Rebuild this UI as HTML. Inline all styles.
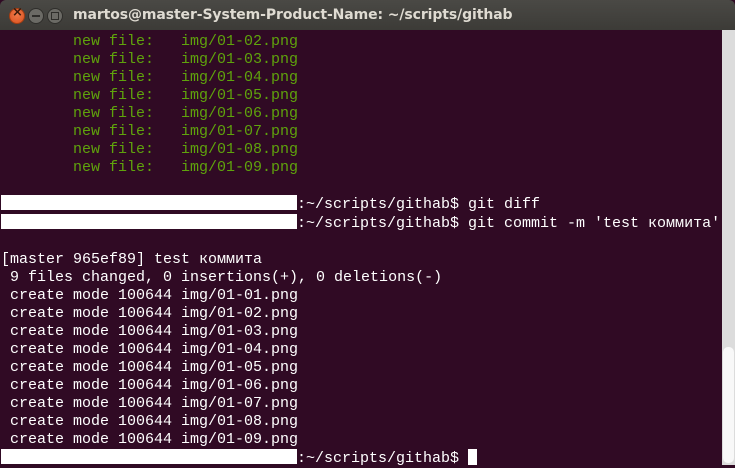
<!DOCTYPE html>
<html><head><meta charset="utf-8"><style>
body{margin:0;width:735px;height:465px;overflow:hidden;background:#300a24;position:relative;font-family:"Liberation Mono",monospace}
#tb{position:absolute;left:0;top:0;width:735px;height:30px;background:linear-gradient(#4a4945,#3c3b37);border-radius:6px 6px 0 0}
.b{position:absolute;top:8px;width:16px;height:16px;border-radius:50%;box-sizing:border-box}
#title{position:absolute;left:73px;top:7px;color:#dfdbd2;font:bold 14px "DejaVu Sans","Liberation Sans",sans-serif;letter-spacing:-0.1px}
#term{position:absolute;left:1px;top:33px;font-size:15px;line-height:18px;color:#fff;white-space:pre}
.g{color:#5fa30c}
.w{display:inline-block;background:#fff;width:296px;height:15px;vertical-align:-2px}
#sb{position:absolute;left:722px;top:30px;width:13px;height:435px;background:#dcdcdc}
#th{position:absolute;left:723px;top:347px;width:11px;height:116px;background:#f8f8f8;border-radius:5px}
#cur{display:inline-block;width:9px;height:16px;background:#fff;vertical-align:-3px}
</style></head><body>
<div id="tb">
<div class="b" style="left:9px;background:radial-gradient(circle at 50% 40%,#f07a4a,#d9501e);border:1px solid #a43d12"></div>
<span style="position:absolute;left:12px;top:5px;color:#3a1a0a;font:bold 13px 'DejaVu Sans',sans-serif">×</span>
<div class="b" style="left:28px;background:#6b6a65;border:1px solid #2f2e2b"></div>
<div style="position:absolute;left:32px;top:15px;width:8px;height:2px;background:#2e2d2a"></div>
<div class="b" style="left:47px;background:#6b6a65;border:1px solid #2f2e2b"></div>
<div style="position:absolute;left:51px;top:12px;width:6px;height:6px;border:1px solid #2e2d2a"></div>
<div id="title">martos@master-System-Product-Name: ~/scripts/githab</div>
</div>
<div id="term"><span class="g">        new file:   img/01-02.png
        new file:   img/01-03.png
        new file:   img/01-04.png
        new file:   img/01-05.png
        new file:   img/01-06.png
        new file:   img/01-07.png
        new file:   img/01-08.png
        new file:   img/01-09.png</span>

<span class="w"></span>:~/scripts/githab$ git diff
<span class="w"></span>:~/scripts/githab$ git commit -m 'test коммита'

[master 965ef89] test коммита
 9 files changed, 0 insertions(+), 0 deletions(-)
 create mode 100644 img/01-01.png
 create mode 100644 img/01-02.png
 create mode 100644 img/01-03.png
 create mode 100644 img/01-04.png
 create mode 100644 img/01-05.png
 create mode 100644 img/01-06.png
 create mode 100644 img/01-07.png
 create mode 100644 img/01-08.png
 create mode 100644 img/01-09.png
<span class="w"></span>:~/scripts/githab$ <span id="cur"></span></div>
<div id="sb"></div><div id="th"></div>
</body></html>
